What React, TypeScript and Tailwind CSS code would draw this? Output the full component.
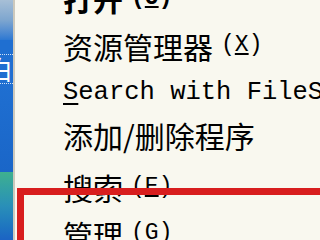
import React from 'react';

const cjk = { fontFamily: '"Noto Sans CJK SC", "Noto Sans", sans-serif' };
const mono = { fontFamily: '"Liberation Mono", "DejaVu Sans Mono", monospace' };

const Key: React.FC<{ k: string; bold?: boolean }> = ({ k, bold }) => (
  <span className={`ml-[8px] text-[23px] ${bold ? 'font-bold' : ''}`} style={mono}>
    (<span className="underline underline-offset-2">{k}</span>)
  </span>
);

const Row: React.FC<{ h: string; children: React.ReactNode }> = ({ h, children }) => (
  <div className={`${h} shrink-0 flex items-center whitespace-nowrap`}>{children}</div>
);

export default function App() {
  return (
    <div className="relative w-[320px] h-[240px] overflow-hidden flex bg-[#f9f8ef] text-black">
      {/* desktop strip behind the menu */}
      <div className="w-[13px] shrink-0 flex flex-col bg-[#1f6fd1] overflow-hidden">
        <div className="h-[40px] bg-gradient-to-b from-[#a7bfd6] via-[#7ea6cf] to-[#2c78d2]" />
        <div className="h-[14px]" />
        <div className="h-[30px] flex items-center justify-end border-y border-dotted border-[#cfe0f5] overflow-hidden">
          <span className="text-[26px] leading-none text-white shrink-0" style={cjk}>白</span>
        </div>
        <div className="h-[88px] bg-gradient-to-b from-[#1f6fd1] to-[#1a66c8]" />
        <div className="flex-1 bg-gradient-to-b from-[#3fb08e] via-[#2a8fb8] to-[#1c63c4]" />
      </div>
      <div className="w-[2px] shrink-0 bg-[#cdc9bc]" />

      {/* menu items */}
      <div className="flex-1 pl-[48px] -mt-[23px] flex flex-col text-[30px] leading-none" style={cjk}>
        <Row h="h-[42px]">
          <span className="font-bold">打开</span>
          <Key k="O" bold />
        </Row>
        <Row h="h-[53px]">
          <span>资源管理器</span>
          <Key k="X" />
        </Row>
        <Row h="h-[35px]">
          <span className="text-[25.5px] mt-[6px]" style={mono}>
            <span className="underline underline-offset-4">S</span>earch with FileSeek
          </span>
        </Row>
        <Row h="h-[56px]">
          <span>添加/删除程序</span>
        </Row>
        <Row h="h-[48px]">
          <span>搜索</span>
          <Key k="E" />
        </Row>
        <Row h="h-[45px]">
          <span>管理</span>
          <Key k="G" />
        </Row>
      </div>

      {/* red highlight box drawn over the menu */}
      <div className="absolute left-[17px] top-[188px] w-[340px] h-[100px] border-[7px] border-[#d81e1e]" />
    </div>
  );
}
